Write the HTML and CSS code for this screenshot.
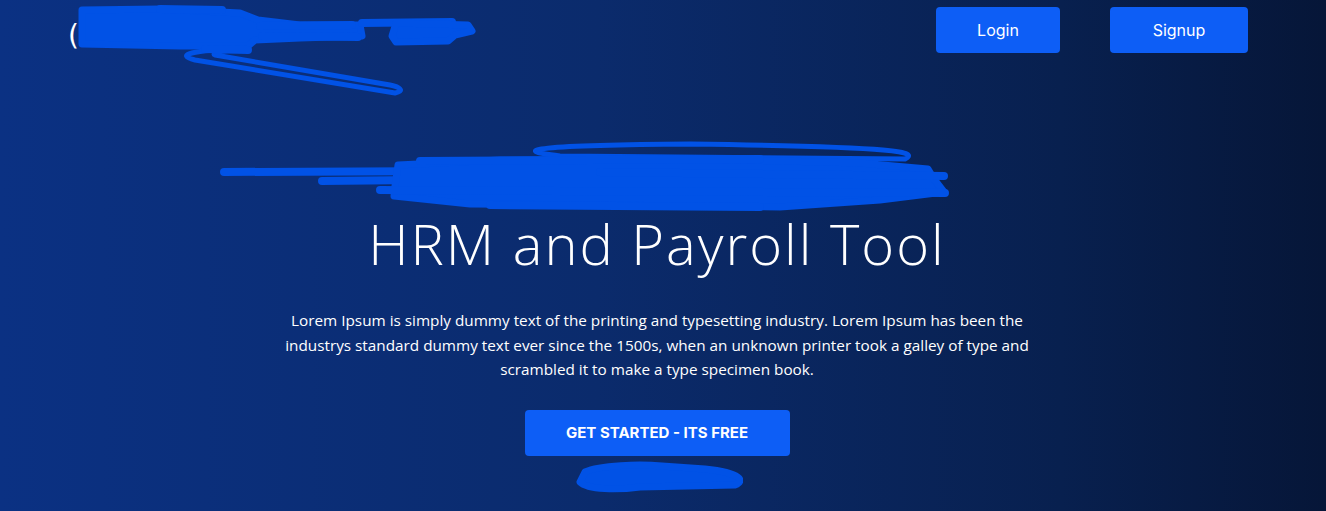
FILE: index.html
```html
<!DOCTYPE html>
<html lang="en">
<head>
<meta charset="utf-8">
<title>HRM and Payroll Tool</title>
<link rel="stylesheet" href="styles.css">
</head>
<body>
<div class="page">
  <header class="nav">
    <div class="logo">
      <span class="logo-mark">(</span>
      <svg class="scribble logo-scribble" width="420" height="100" viewBox="60 0 420 100">
        <path class="fill" d="M82,10 L160,9 L240,13 L258,20 L300,25 L360,25 L362,36 L300,38 L255,40 L248,46 L180,46 L82,44 Z"/>
        <path class="line" d="M222,10 L160,9"/>
        <path class="line" d="M260,26 L352,25"/>
        <path class="line" d="M262,36 L358,37"/>
        <path class="line" d="M362,23 L452,22"/>
        <path class="fill" d="M396,23 L468,25 L472,31 L455,35 L448,41 L396,42 L392,36 Z"/>
        <path class="thin" d="M245,49 C190,50 175,55 195,60 L395,93 C405,91 400,87 390,85 L215,55 C210,53 225,50 245,49 Z"/>
        <path class="line" d="M205,49 L248,50"/>
      </svg>
    </div>
    <nav class="auth">
      <a class="btn btn-nav btn-login" href="#">Login</a>
      <a class="btn btn-nav btn-signup" href="#">Signup</a>
    </nav>
  </header>

  <main class="hero">
    <svg class="scribble sub-scribble" width="884" height="76" viewBox="215 140 884 76">
      <path class="thin" d="M690,144 C540,145 505,150 560,156 L905,159 C918,152 905,147 690,144 Z"/>
      <path class="line" d="M224,172 L720,170"/>
      <path class="line" d="M322,181 L520,179"/>
      <path class="fill" d="M398,165 L500,160 L700,159 L860,163 L928,169 L934,179 L944,192 L880,200 L780,207 L600,205 L470,204 L394,196 L395,186 Z"/>
      <path class="line" d="M600,172 L944,176"/>
      <path class="line" d="M380,190 L945,193"/>
      <path class="line" d="M420,161 L760,159"/>
      <path class="line" d="M490,205 L760,207"/>
    </svg>
    <h1 class="title">HRM and Payroll Tool</h1>
    <p class="lead">Lorem Ipsum is simply dummy text of the printing and typesetting industry. Lorem Ipsum has been the industrys standard dummy text ever since the 1500s, when an unknown printer took a galley of type and scrambled it to make a type specimen book.</p>
    <a class="btn btn-cta" href="#">GET STARTED - ITS FREE</a>
    <svg class="scribble foot-scribble" width="172" height="34" viewBox="571 458 172 34">
      <path class="fill" d="M585,470 C600,463 640,462 662,464 L705,467 C742,471 745,479 735,483 L640,485 C618,488 588,488 580,480 Z"/>
    </svg>
  </main>
</div>
</body>
</html>
```

FILE: styles.css
```css
* { box-sizing: border-box; }

html, body {
  margin: 0;
  padding: 0;
}

body {
  width: 1326px;
  height: 511px;
  overflow: hidden;
  background: linear-gradient(to right, #0b3183 0%, #0b2b6c 45%, #08204f 80%, #061638 100%);
  color: #ffffff;
  font-family: "Open Sans", "Liberation Sans", sans-serif;
}

.page {
  height: 511px;
}

.nav {
  display: flex;
  justify-content: space-between;
  align-items: flex-start;
  padding: 7px 78px 0 68px;
  height: 100px;
}

.logo {
  position: relative;
  width: 420px;
  height: 93px;
}

.logo-mark {
  display: block;
  margin-top: 12px;
  font-family: "DejaVu Sans", sans-serif;
  font-size: 28px;
  line-height: 34px;
  font-weight: 400;
  color: #ffffff;
}

.scribble .fill {
  fill: #0152e6;
  stroke: #0152e6;
  stroke-width: 7;
  stroke-linejoin: round;
}

.scribble .line {
  fill: none;
  stroke: #0152e6;
  stroke-width: 8;
  stroke-linecap: round;
}

.scribble .thin {
  fill: none;
  stroke: #0152e6;
  stroke-width: 5;
  stroke-linecap: round;
  stroke-linejoin: round;
}

.logo-scribble {
  position: absolute;
  left: -8px;
  top: -7px;
}

.auth {
  display: flex;
  gap: 50px;
}

.btn {
  display: inline-flex;
  align-items: center;
  justify-content: center;
  background: #0d5ef6;
  color: #ffffff;
  text-decoration: none;
  border-radius: 4px;
}

.btn-nav {
  height: 46px;
  font-family: "Inter", "Open Sans", sans-serif;
  font-size: 16px;
  font-weight: 400;
}

.btn-login { width: 124px; }
.btn-signup { width: 138px; }

.hero {
  display: flex;
  flex-direction: column;
  align-items: center;
  padding-right: 12px;
  margin-top: 40px;
}

.sub-scribble {
  display: block;
}

.title {
  margin: -3px 0 0;
  font-family: "Open Sans", sans-serif;
  font-weight: 300;
  font-size: 56px;
  line-height: 60px;
  letter-spacing: 2px;
}

.lead {
  width: 770px;
  margin: 35px 0 0;
  text-align: center;
  font-family: "Open Sans", sans-serif;
  font-weight: 500;
  font-size: 15.3px;
  line-height: 24.5px;
}

.btn-cta {
  margin-top: 28px;
  width: 265px;
  height: 46px;
  font-family: "Inter", "Open Sans", sans-serif;
  font-weight: 700;
  font-size: 15px;
}

.foot-scribble {
  display: block;
  margin-top: 4px;
}
```
